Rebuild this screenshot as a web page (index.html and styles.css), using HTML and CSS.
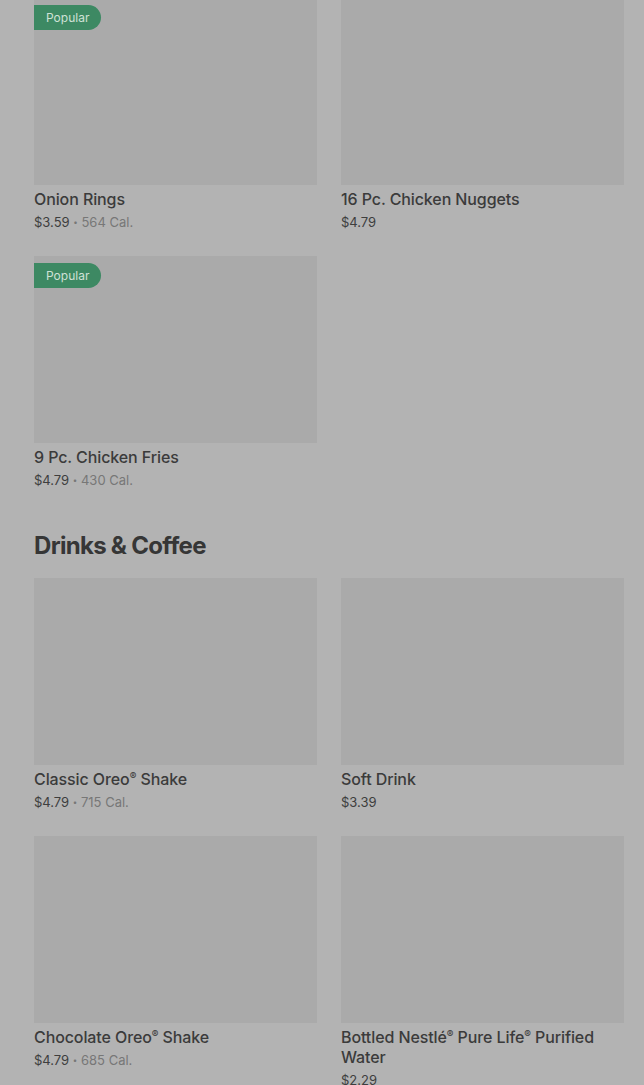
FILE: index.html
```html
<!DOCTYPE html>
<html lang="en">
<head>
	<meta charset="UTF-8">
	<meta name="viewport" content="width=device-width, initial-scale=1.0">
	<title>Menu</title>
	<link rel="stylesheet" href="styles.css">
</head>
<body>
	<div class="menu">
		<section class="menu-section">
			<div class="item-grid">
				<div class="item">
					<div class="item-img"><span class="badge">Popular</span></div>
					<div class="item-name">Onion Rings</div>
					<div class="item-meta">$3.59 <span class="cal"><span class="dot">•</span> 564 Cal.</span></div>
				</div>
				<div class="item">
					<div class="item-img"></div>
					<div class="item-name">16 Pc. Chicken Nuggets</div>
					<div class="item-meta">$4.79</div>
				</div>
				<div class="item">
					<div class="item-img"><span class="badge">Popular</span></div>
					<div class="item-name">9 Pc. Chicken Fries</div>
					<div class="item-meta">$4.79 <span class="cal"><span class="dot">•</span> 430 Cal.</span></div>
				</div>
			</div>
		</section>

		<section class="menu-section">
			<h2 class="section-title">Drinks &amp; Coffee</h2>
			<div class="item-grid">
				<div class="item">
					<div class="item-img"></div>
					<div class="item-name">Classic Oreo<span class="reg">®</span> Shake</div>
					<div class="item-meta">$4.79 <span class="cal"><span class="dot">•</span> 715 Cal.</span></div>
				</div>
				<div class="item">
					<div class="item-img"></div>
					<div class="item-name">Soft Drink</div>
					<div class="item-meta">$3.39</div>
				</div>
				<div class="item">
					<div class="item-img"></div>
					<div class="item-name">Chocolate Oreo<span class="reg">®</span> Shake</div>
					<div class="item-meta">$4.79 <span class="cal"><span class="dot">•</span> 685 Cal.</span></div>
				</div>
				<div class="item">
					<div class="item-img"></div>
					<div class="item-name">Bottled Nestlé<span class="reg">®</span> Pure Life<span class="reg">®</span> Purified Water</div>
					<div class="item-meta">$2.29</div>
				</div>
			</div>
		</section>
	</div>
</body>
</html>
```

FILE: styles.css
```css
body {
	margin: 0;
	padding: 0;
	background-color: #b3b3b3;
	font-family: Inter, "Noto Sans", sans-serif;
	color: #3a3a3a;
}

.menu {
	margin-top: -2px;
	padding: 0 20px 0 34px;
}

.menu-section {
	margin-bottom: 40px;
}

.section-title {
	margin: 0 0 16px;
	font-size: 24px;
	line-height: 32px;
	font-weight: 700;
	letter-spacing: -0.7px;
	color: #363636;
}

.item-grid {
	display: grid;
	grid-template-columns: repeat(2, 283px);
	column-gap: 24px;
	row-gap: 24px;
}

.item-img {
	position: relative;
	height: 187px;
	background-color: #aaaaaa;
	margin-bottom: 4px;
}

.badge {
	position: absolute;
	top: 7px;
	left: 0;
	padding: 0 12px;
	height: 25px;
	line-height: 25px;
	font-size: 12px;
	color: #cfe1d6;
	background-color: #3d8963;
	border-radius: 0 13px 13px 0;
}

.item-name {
	font-size: 16px;
	line-height: 20px;
	font-weight: 500;
	letter-spacing: -0.1px;
	color: #3b3b3b;
}

.item-name .reg {
	font-size: 10px;
	vertical-align: 5px;
	line-height: 0;
}

.item-meta {
	margin-top: 3px;
	font-size: 13px;
	line-height: 20px;
	color: #3e3e3e;
}

.item-meta .cal {
	color: #777777;
}

.item-meta .dot {
	font-size: 8px;
	vertical-align: 2px;
}
```
